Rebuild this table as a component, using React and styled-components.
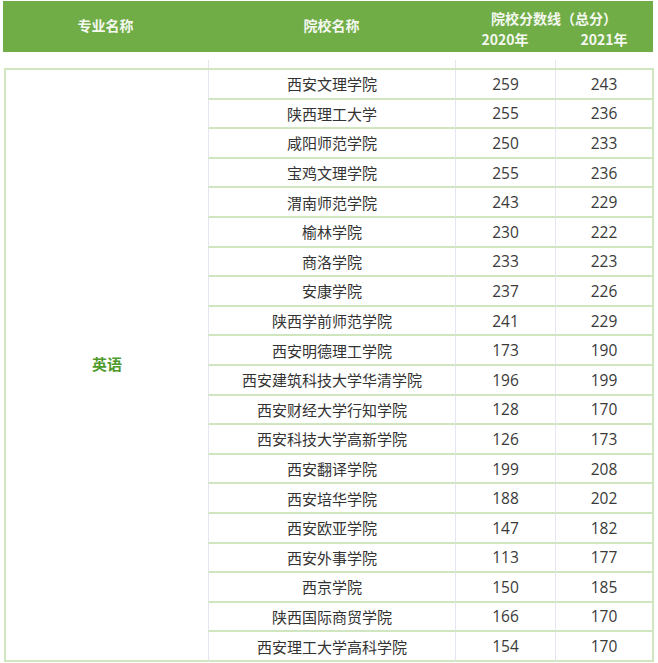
import React from "react";
import styled, { createGlobalStyle } from "styled-components";

const GlobalStyle = createGlobalStyle`
  html, body { margin: 0; padding: 0; background: #fff; }
  body { font-family: "Noto Sans CJK SC", "Noto Sans", sans-serif; }
`

const cols = "202px 247px 100px 97px";

const Page = styled.div`
  width: 658px;
  height: 663px;
  padding: 1px 0 0 3px;
  box-sizing: border-box;
  overflow: hidden;
`

const HeaderBar = styled.div`
  display: grid;
  grid-template-columns: 205px 247px 100px 98px;
  grid-template-rows: 27px 24px;
  width: 650px;
  height: 51px;
  background: #70ad47;
  color: #f4f8f0;
  font-weight: 700;
  font-size: 14px;
`

const HeadCell = styled.div`
  display: flex;
  align-items: ${p => p.$align || "center"};
  justify-content: center;
  grid-column: ${p => p.$col};
  grid-row: ${p => p.$row};
  padding-top: ${p => p.$pt || 0}px;
  padding-bottom: ${p => p.$pb || 0}px;
`

const Spacer = styled.div`
  display: grid;
  grid-template-columns: ${cols};
  height: 16px;
  margin-left: 3px;
`

const SpacerCell = styled.div`
  border-left: ${p => (p.$line ? "1px solid #e3e7f0" : "none")};
  margin-top: 8px;
`

const Body = styled.div`
  display: grid;
  grid-template-columns: ${cols};
  grid-template-rows: repeat(20, 29.6px);
  width: 650px;
  margin-left: 1px;
  border-top: 2px solid #cfe6c0;
  border-left: 2px solid #cfe6c0;
  border-right: 2px solid #cfe6c0;
  box-sizing: border-box;
  color: #333;
  font-size: 15px;
`

const Major = styled.div`
  grid-column: 1;
  grid-row: 1 / span 20;
  display: flex;
  align-items: center;
  justify-content: center;
  color: #4f9a2c;
  font-weight: 700;
  font-size: 15px;
  border-bottom: 2px solid #cfe6c0;
  padding-bottom: 2px;
`

const Cell = styled.div`
  display: flex;
  align-items: center;
  justify-content: center;
  border-left: 1px solid #e3e7f0;
  border-bottom: 2px solid #cfe6c0;
  font-size: ${p => (p.$num ? "15.5px" : "15px")};
  font-family: ${p => (p.$num ? '"Open Sans", "Noto Sans CJK SC", sans-serif' : '"Noto Sans CJK SC", sans-serif')};
  color: ${p => (p.$num ? "#3a3a3a" : "#333")};
`

const rows = [
  ["西安文理学院", 259, 243],
  ["陕西理工大学", 255, 236],
  ["咸阳师范学院", 250, 233],
  ["宝鸡文理学院", 255, 236],
  ["渭南师范学院", 243, 229],
  ["榆林学院", 230, 222],
  ["商洛学院", 233, 223],
  ["安康学院", 237, 226],
  ["陕西学前师范学院", 241, 229],
  ["西安明德理工学院", 173, 190],
  ["西安建筑科技大学华清学院", 196, 199],
  ["西安财经大学行知学院", 128, 170],
  ["西安科技大学高新学院", 126, 173],
  ["西安翻译学院", 199, 208],
  ["西安培华学院", 188, 202],
  ["西安欧亚学院", 147, 182],
  ["西安外事学院", 113, 177],
  ["西京学院", 150, 185],
  ["陕西国际商贸学院", 166, 170],
  ["西安理工大学高科学院", 154, 170],
]

export default function App() {
  return (
    <Page>
      <GlobalStyle />
      <HeaderBar>
        <HeadCell $col="1" $row="1 / span 2" $pb={4}>专业名称</HeadCell>
        <HeadCell $col="2" $row="1 / span 2" $pb={4}>院校名称</HeadCell>
        <HeadCell $col="3 / span 2" $row="1" $align="flex-end">院校分数线（总分）</HeadCell>
        <HeadCell $col="3" $row="2" $align="flex-start" $pt={1}>2020年</HeadCell>
        <HeadCell $col="4" $row="2" $align="flex-start" $pt={1}>2021年</HeadCell>
      </HeaderBar>
      <Spacer>
        <SpacerCell />
        <SpacerCell $line />
        <SpacerCell $line />
        <SpacerCell $line />
      </Spacer>
      <Body>
        <Major>英语</Major>
        {rows.map(([name, a, b]) => (
          <React.Fragment key={name}>
            <Cell>{name}</Cell>
            <Cell $num>{a}</Cell>
            <Cell $num>{b}</Cell>
          </React.Fragment>
        ))}
      </Body>
    </Page>
  )
}
